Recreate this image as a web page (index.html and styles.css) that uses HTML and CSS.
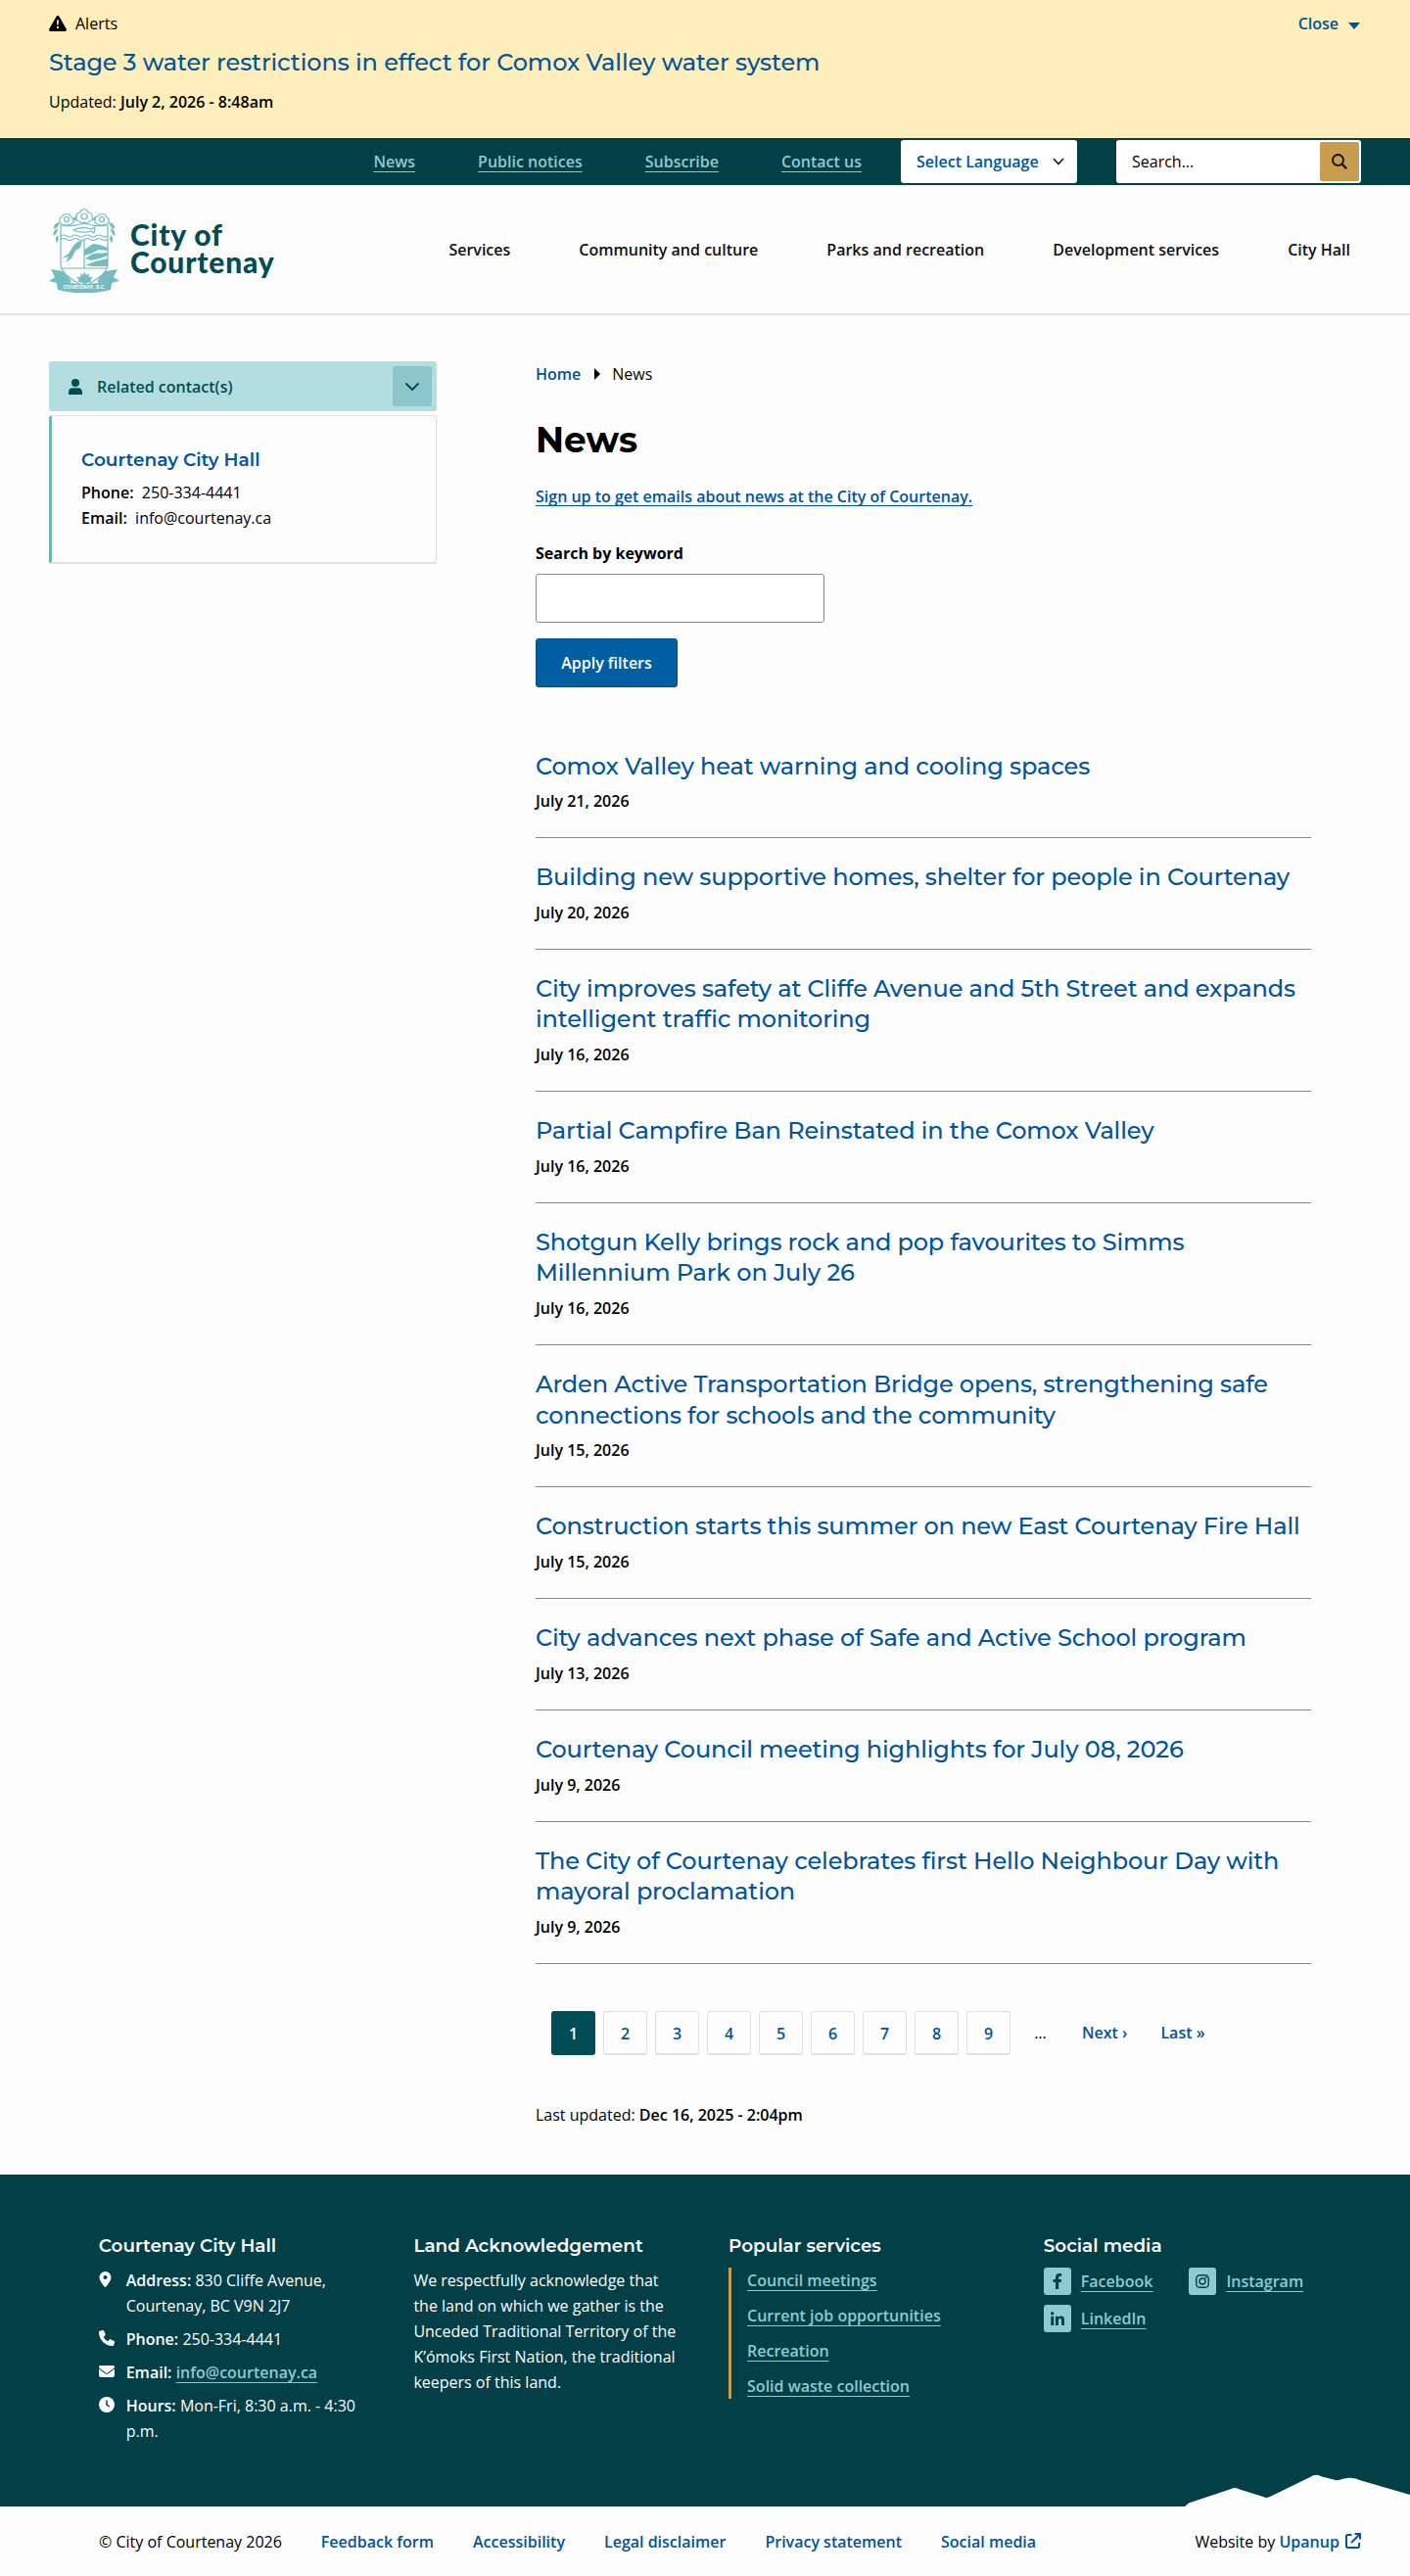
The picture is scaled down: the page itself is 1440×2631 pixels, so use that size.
FILE: index.html
```html
<!DOCTYPE html>
<html lang="en">
<head>
  <meta charset="UTF-8">
  <meta name="viewport" content="width=device-width, initial-scale=1.0">
  <title>News | City of Courtenay</title>
  <link rel="stylesheet" href="styles.css">
</head>
<body>

<section class="alert">
  <div class="container">
    <div class="alert-top">
      <span class="alert-label">
        <svg width="18" height="16" viewBox="0 0 18 16"><path d="M9 0c.6 0 1.100.300 1.400.800l7.300 12.700c.7 1.100-.1 2.500-1.400 2.500H1.700C.4 16-.4 14.600.300 13.500L7.600.800C7.900.300 8.400 0 9 0z" fill="#000"/><path d="M8 4.500h2l-.3 5H8.300zM8 11h2v2H8z" fill="#feeebb"/></svg>
        Alerts
      </span>
      <a class="close" href="#">Close <span class="caret-down"></span></a>
    </div>
    <h2 class="alert-title"><a href="#">Stage 3 water restrictions in effect for Comox Valley water system</a></h2>
    <p>Updated: <b>July 2, 2026 - 8:48am</b></p>
  </div>
</section>

<div class="topbar">
  <div class="container">
    <nav class="top-links">
      <a href="#">News</a>
      <a href="#">Public notices</a>
      <a href="#">Subscribe</a>
      <a href="#">Contact us</a>
    </nav>
    <div class="language">
      Select Language
      <svg width="12" height="8" viewBox="0 0 12 8"><path d="M1 1l5 5.500L11 1" fill="none" stroke="#222" stroke-width="1.800"/></svg>
    </div>
    <div class="search">
      <span>Search...</span>
      <button aria-label="Search"><svg width="16" height="16" viewBox="0 0 16 16"><circle cx="6.500" cy="6.500" r="5.500" fill="none" stroke="#111" stroke-width="1.900"/><path d="M10.400 10.400l4.800 4.800" stroke="#111" stroke-width="2.200"/></svg></button>
    </div>
  </div>
</div>

<header class="header">
  <div class="container">
    <a class="logo" href="#">
      <svg class="crest" width="72" height="86" viewBox="0 0 72 86">
        <g fill="none" stroke="#74bcc0" stroke-width="1.200">
          <path d="M12 17v41c2 10 13 15 24 22 11-7 22-12 24-22V17q-12 2-24-2-12 4-24 2z" fill="#fdfdfd"/>
          <path d="M12 28q3-2 6 0t6 0 6 0 6 0 6 0 6 0 6 0 6 0M12 31.500q3-2 6 0t6 0 6 0 6 0 6 0 6 0 6 0 6 0M12 61h48M36 32v29"/>
          <path d="M25 22q8-4 18-1l4-2-1 6-3-2q-10 3-18-1z"/>
          <circle cx="36" cy="8" r="3"/><circle cx="18" cy="11" r="2.500"/><circle cx="54" cy="11" r="2.500"/>
          <path d="M31 13q-5-1-3-5 0-4 4-4 1-4 4-3 3-1 4 3 4 0 4 4 2 4-3 5-2 3-5 1-3 2-5-1zM14 16q-4-1-3-4 0-4 3-4 1-3 4-2 4-1 4 2 3 1 3 4 1 3-3 4-4 2-8 0zM50 16q-4-1-3-4 0-4 3-4 1-3 4-2 4-1 4 2 3 1 3 4 1 3-3 4-4 2-8 0z"/>
        </g>
        <g fill="#74bcc0">
          <path d="M24 11l4-4 1 6zM44 12l4-5v5z"/>
          <path d="M11 14q-7 1-6 7 4-1 6-7zM9 20q-6 3-4 8 4-3 4-8zM9 27q-4 4-1 8 3-4 1-8zM61 14q7 1 6 7-4-1-6-7zM63 20q6 3 4 8-4-3-4-8zM63 27q4 4 1 8-3-4-1-8z"/>
          <path d="M13 51l7-5 5-8 4-4 5-1-2 7-5 3-4 8-6 4 3-6zM36 42l9-6 7 1 8 3v3l-9-1-8 4-7 2zM37 51l8-5 15-1v3l-8 3-9 2zM37 58l10-4 13-3v8H45z"/>
          <path d="M36 64l2 4 3-2-.5 4 4-.5-2 4 1 1-6 2v3h-2v-3l-6-2 1-1-2-4 4 .5-.5-4 3 2z"/>
          <path d="M2 62l12 2 9 10-6 5L8 76 0 74l6-4zM70 62l-12 2-9 10 6 5 9-3 8-2-6-4z"/>
          <path d="M7 72q29 10 58 0l-2 11q-27 7-54 0z"/>
        </g>
        <text x="36" y="82" text-anchor="middle" textLength="43" class="crest-text">COURTENAY, B.C.</text>
      </svg>
      <span class="logo-text"><span>City of</span><span>Courtenay</span></span>
    </a>
    <nav class="main-nav">
      <a href="#">Services</a>
      <a href="#">Community and culture</a>
      <a href="#">Parks and recreation</a>
      <a href="#">Development services</a>
      <a href="#">City Hall</a>
    </nav>
  </div>
</header>

<div class="container page">
  <aside class="sidebar">
    <div class="related">
      <svg width="14" height="16" viewBox="0 0 14 16" fill="#014d55"><circle cx="7" cy="4" r="4"/><path d="M0 16v-2.500C0 10.500 2 9.300 4.200 9.300h5.600c2.200 0 4.200 1.200 4.200 4.200V16z"/></svg>
      <span>Related contact(s)</span>
      <button aria-label="Toggle"><svg width="16" height="10" viewBox="0 0 16 10"><path d="M1.500 1.500L8 8l6.500-6.500" fill="none" stroke="#014048" stroke-width="1.800"/></svg></button>
    </div>
    <div class="contact-card">
      <h2><a href="#">Courtenay City Hall</a></h2>
      <p><b>Phone:</b>&nbsp; 250-334-4441</p>
      <p><b>Email:</b>&nbsp; info@courtenay.ca</p>
    </div>
  </aside>

  <main class="content">
    <div class="breadcrumb"><a href="#">Home</a><span class="caret-right"></span>News</div>
    <h1>News</h1>
    <p><a class="underlined" href="#">Sign up to get emails about news at the City of Courtenay.</a></p>

    <form class="filters">
      <label for="keyword">Search by keyword</label>
      <input type="text" id="keyword">
      <button type="button">Apply filters</button>
    </form>

    <div class="news-list">
      <article>
        <h2><a href="#">Comox Valley heat warning and cooling spaces</a></h2>
        <p>July 21, 2026</p>
      </article>
      <article>
        <h2><a href="#">Building new supportive homes, shelter for people in Courtenay</a></h2>
        <p>July 20, 2026</p>
      </article>
      <article>
        <h2><a href="#">City improves safety at Cliffe Avenue and 5th Street and expands<br>intelligent traffic monitoring</a></h2>
        <p>July 16, 2026</p>
      </article>
      <article>
        <h2><a href="#">Partial Campfire Ban Reinstated in the Comox Valley</a></h2>
        <p>July 16, 2026</p>
      </article>
      <article>
        <h2><a href="#">Shotgun Kelly brings rock and pop favourites to Simms<br>Millennium Park on July 26</a></h2>
        <p>July 16, 2026</p>
      </article>
      <article>
        <h2><a href="#">Arden Active Transportation Bridge opens, strengthening safe<br>connections for schools and the community</a></h2>
        <p>July 15, 2026</p>
      </article>
      <article>
        <h2><a href="#">Construction starts this summer on new East Courtenay Fire Hall</a></h2>
        <p>July 15, 2026</p>
      </article>
      <article>
        <h2><a href="#">City advances next phase of Safe and Active School program</a></h2>
        <p>July 13, 2026</p>
      </article>
      <article>
        <h2><a href="#">Courtenay Council meeting highlights for July 08, 2026</a></h2>
        <p>July 9, 2026</p>
      </article>
      <article>
        <h2><a href="#">The City of Courtenay celebrates first Hello Neighbour Day with<br>mayoral proclamation</a></h2>
        <p>July 9, 2026</p>
      </article>
    </div>

    <nav class="pager">
      <a class="page-num current" href="#">1</a>
      <a class="page-num" href="#">2</a>
      <a class="page-num" href="#">3</a>
      <a class="page-num" href="#">4</a>
      <a class="page-num" href="#">5</a>
      <a class="page-num" href="#">6</a>
      <a class="page-num" href="#">7</a>
      <a class="page-num" href="#">8</a>
      <a class="page-num" href="#">9</a>
      <span class="dots">…</span>
      <a class="next" href="#">Next ›</a>
      <a href="#">Last »</a>
    </nav>

    <p class="updated">Last updated: <b>Dec 16, 2025 - 2:04pm</b></p>
  </main>
</div>

<footer class="footer">
  <div class="footer-cols">
    <div class="col">
      <h2>Courtenay City Hall</h2>
      <ul class="address">
        <li><svg width="16" height="16" viewBox="0 0 16 16"><path d="M6.500 0a6 6 0 0 1 6 6c0 3-3.600 7.500-5.300 9.600a.9.9 0 0 1-1.400 0C4.100 13.500.5 9 .5 6a6 6 0 0 1 6-6zm0 4a2 2 0 1 0 0 4 2 2 0 0 0 0-4z"/></svg><span><b>Address:</b> 830 Cliffe Avenue, Courtenay, BC V9N 2J7</span></li>
        <li><svg width="16" height="16" viewBox="0 0 16 16"><path d="M5.200.800c-.3-.6-.9-1-1.600-.8L.9.800C.3 1 0 1.500 0 2c0 7.700 6.300 14 14 14 .6 0 1.100-.4 1.200-1l.8-2.700c.2-.7-.2-1.400-.8-1.600l-3-1.300c-.6-.2-1.200-.1-1.600.4l-1.300 1.500C7.100 10.300 5.700 8.900 4.700 6.700l1.500-1.300c.5-.4.6-1.100.4-1.600z"/></svg><span><b>Phone:</b> 250-334-4441</span></li>
        <li><svg width="16" height="16" viewBox="0 0 16 16"><path d="M1.500 2h13c.8 0 1.500.7 1.500 1.500 0 .5-.2.900-.6 1.200L8.600 9.800c-.4.300-.8.300-1.200 0L.6 4.700C.2 4.400 0 4 0 3.500 0 2.700.700 2 1.500 2zM0 5.500l6.800 5.100c.7.500 1.700.5 2.400 0L16 5.500V12a2 2 0 0 1-2 2H2a2 2 0 0 1-2-2z"/></svg><span><b>Email:</b> <a href="#">info@courtenay.ca</a></span></li>
        <li><svg width="16" height="16" viewBox="0 0 16 16"><circle cx="8" cy="8" r="8"/><path d="M8 3.500V8l3 2" fill="none" stroke="#023f47" stroke-width="1.500"/></svg><span><b>Hours:</b> Mon-Fri, 8:30 a.m. - 4:30 p.m.</span></li>
      </ul>
    </div>
    <div class="col">
      <h2>Land Acknowledgement</h2>
      <p class="land">We respectfully acknowledge that the land on which we gather is the Unceded Traditional Territory of the K’ómoks First Nation, the traditional keepers of this land.</p>
    </div>
    <div class="col">
      <h2>Popular services</h2>
      <ul class="popular">
        <li><a href="#">Council meetings</a></li>
        <li><a href="#">Current job opportunities</a></li>
        <li><a href="#">Recreation</a></li>
        <li><a href="#">Solid waste collection</a></li>
      </ul>
    </div>
    <div class="col">
      <h2>Social media</h2>
      <ul class="social">
        <li><span class="icon"><svg width="16" height="16" viewBox="0 0 16 16"><path d="M6 16V9H3.500V6H6V4.200C6 1.400 7.400 0 10 0c1 0 1.700.1 2.200.200v2.600h-1.500C9.500 2.800 9.200 3.400 9.200 4.400V6h2.900l-.5 3H9.200v7z"/></svg></span><a href="#">Facebook</a></li>
        <li><span class="icon instagram"><svg width="16" height="16" viewBox="0 0 16 16"><rect x="1.700" y="1.700" width="12.600" height="12.600" rx="3.600"/><circle cx="8" cy="8" r="3"/><circle cx="11.700" cy="4.300" r=".3"/></svg></span><a href="#">Instagram</a></li>
        <li><span class="icon"><svg width="16" height="16" viewBox="0 0 16 16"><circle cx="2.700" cy="2.700" r="1.700"/><path d="M1.300 5.700h2.900V15H1.300zM6 5.700h2.800V7c.5-.9 1.500-1.500 2.700-1.500 2.900 0 3.500 1.800 3.500 4.300V15h-2.900v-4.600c0-1.100 0-2.400-1.500-2.400S8.900 9.200 8.900 10.400V15H6z"/></svg></span><a href="#">LinkedIn</a></li>
      </ul>
    </div>
  </div>
  <svg class="mountains" width="230" height="33" viewBox="0 0 230 33"><path d="M0 33L4 29.500 46 15.500Q51 12.500 56 15.500L80 23Q84 25 88 22.500L128 3Q134-1 140 2.500L152 5.500Q156 7 161 5 171 2 180 6.500L230 21v12z" fill="#fdfdfd"/></svg>
</footer>

<div class="bottom">
  <span>© City of Courtenay 2026</span>
  <a href="#">Feedback form</a>
  <a href="#">Accessibility</a>
  <a href="#">Legal disclaimer</a>
  <a href="#">Privacy statement</a>
  <a href="#">Social media</a>
  <span class="credit">Website by <a href="#">Upanup <svg width="16" height="16" viewBox="0 0 16 16" fill="none" stroke="#00549b" stroke-width="2"><path d="M6.500 2H2.500Q1 2 1 3.500v10Q1 15 2.500 15h10q1.500 0 1.500-1.500V10M9.500 1H15v5.500M15 1L6 10"/></svg></a></span>
</div>

</body>
</html>
```
FILE: styles.css
```css
* {
  box-sizing: border-box;
}

body {
  margin: 0;
  background: #fdfdfd;
  color: #000;
  font-family: "Open Sans", sans-serif;
  font-size: 16px;
  line-height: 26px;
}

h1, h2, p, ul {
  margin: 0;
  padding: 0;
}

ul {
  list-style: none;
}

h1, h2 {
  font-family: Montserrat, Inter, sans-serif;
}

b {
  font-weight: 600;
}

a {
  color: #00549b;
  font-weight: 600;
  text-decoration: none;
}

svg {
  flex-shrink: 0;
}

button {
  border: 0;
  padding: 0;
}

.container {
  width: 1340px;
  margin: 0 auto;
}

/* alert */
.alert {
  height: 141px;
  padding-top: 11px;
  background: #feeebb;
}

.alert-top {
  display: flex;
  justify-content: space-between;
}

.alert-label {
  display: flex;
  align-items: center;
  gap: 9px;
}

.close {
  display: flex;
  align-items: center;
  gap: 10px;
  margin-right: 1px;
}

.caret-down {
  margin-top: 4px;
  border: 6px solid transparent;
  border-top: 7px solid #00549b;
  border-bottom: 0;
}

.alert-title {
  margin: 11px 0 12px;
  font-size: 24px;
  line-height: 31px;
  letter-spacing: -0.1px;
}

.alert-title a,
.news-list h2 a {
  font-weight: 500;
}

/* top bar */
.topbar {
  height: 48px;
  background: #023f47;
}

.topbar .container {
  display: flex;
  align-items: center;
  justify-content: flex-end;
  height: 48px;
}

.top-links {
  display: flex;
  gap: 64px;
  margin-right: 40px;
}

.top-links a,
.footer a {
  color: #8ecbd0;
  text-decoration: underline;
  text-decoration-thickness: 1px;
  text-underline-offset: 4px;
  text-decoration-skip-ink: none;
}

.language {
  display: flex;
  align-items: center;
  justify-content: space-between;
  width: 180px;
  height: 44px;
  margin-right: 40px;
  padding: 0 13px 0 16px;
  border-radius: 3px;
  background: #fff;
  color: #00549b;
  font-weight: 600;
}

.search {
  display: flex;
  align-items: center;
  justify-content: space-between;
  width: 250px;
  height: 44px;
  padding: 0 2px 0 16px;
  border-radius: 3px;
  background: #fff;
}

.search button {
  display: flex;
  align-items: center;
  justify-content: center;
  width: 40px;
  height: 40px;
  border-radius: 2px;
  background: #c99d4f;
}

/* header */
.header {
  height: 133px;
  border-bottom: 2px solid #e1e1e1;
}

.header .container {
  display: flex;
  justify-content: space-between;
  align-items: flex-start;
}

.logo {
  display: flex;
  gap: 11px;
  padding-top: 24px;
}

.crest-text {
  font-family: "Open Sans", sans-serif;
  font-size: 5px;
  font-weight: 700;
  fill: #fdfdfd;
}

.logo-text {
  display: flex;
  flex-direction: column;
  margin-top: 12px;
  color: #014d55;
  font-family: Lato, sans-serif;
  font-size: 30px;
  font-weight: 900;
  line-height: 28px;
  letter-spacing: 0.8px;
}

.main-nav {
  display: flex;
  gap: 70px;
  padding: 53px 11px 0 0;
}

.main-nav a {
  color: #111;
}

/* page */
.page {
  display: flex;
  gap: 101px;
  padding: 47px 51px 0 0;
}

.sidebar {
  width: 396px;
}

.related {
  display: flex;
  align-items: center;
  height: 51px;
  padding: 0 5px 0 20px;
  border-radius: 3px;
  background: #b2dee0;
  color: #014d55;
  font-weight: 600;
}

.related span {
  flex: 1;
  margin-left: 15px;
}

.related button {
  display: flex;
  align-items: center;
  justify-content: center;
  width: 40px;
  height: 41px;
  border-radius: 3px;
  background: #8cc6cb;
}

.contact-card {
  height: 152px;
  margin-top: 4px;
  padding: 32px 30px;
  border: 1px solid #e1e1e1;
  border-left: 3px solid #6fb4b6;
  border-bottom-width: 2px;
  border-radius: 3px;
}

.contact-card h2 {
  margin-bottom: 7px;
  font-size: 18.5px;
  line-height: 26px;
}

.content {
  width: 792px;
}

.breadcrumb {
  display: flex;
  align-items: center;
}

.caret-right {
  margin: 0 12px 0 14px;
  border: 6px solid transparent;
  border-left: 6px solid #000;
  border-right: 0;
}

.content h1 {
  margin: 31px 0 21px;
  font-size: 36px;
  line-height: 47px;
}

.underlined {
  text-decoration: underline;
  text-decoration-thickness: 1px;
  text-underline-offset: 3px;
  text-decoration-skip-ink: none;
}

.filters {
  display: flex;
  flex-direction: column;
  align-items: flex-start;
  margin-top: 32px;
}

.filters label {
  font-weight: 700;
}

.filters input {
  width: 295px;
  height: 50px;
  margin: 8px 0 16px;
  border: 1px solid #888;
  border-radius: 3px;
  background: #fff;
}

.filters button {
  width: 145px;
  height: 50px;
  border: 1px solid #00508c;
  border-radius: 3px;
  background: #005ea3;
  color: #fff;
  font: 600 16px "Open Sans", sans-serif;
}

.news-list {
  margin-top: 40px;
}

.news-list article {
  padding: 24.5px 0 24px;
  border-bottom: 1px solid #86888c;
}

.news-list h2 {
  margin-bottom: 7.2px;
  font-size: 24px;
  line-height: 31.2px;
  letter-spacing: -0.13px;
  white-space: nowrap;
}

.news-list p {
  font-weight: 600;
}

.pager {
  display: flex;
  align-items: center;
  gap: 8px;
  margin: 48px 0 0 16px;
}

.page-num {
  width: 45px;
  height: 45px;
  border: 1px solid #e1e1e1;
  border-bottom-width: 2px;
  border-radius: 3px;
  line-height: 44px;
  text-align: center;
}

.page-num.current {
  border-color: #014d55;
  background: #014d55;
  color: #fff;
}

.dots {
  width: 45px;
  text-align: center;
}

.next {
  margin: 0 26px 0 12px;
}

.updated {
  margin: 48px 0 48px;
}

/* footer */
.footer {
  position: relative;
  height: 339px;
  background: #023f47;
  color: #fdfdfd;
}

.footer-cols {
  display: flex;
  gap: 51.7px;
  padding: 60px 100px 0 100.7px;
}

.col {
  width: 270px;
}

.col h2 {
  margin-bottom: 9px;
  font-size: 18.4px;
  font-weight: 600;
  line-height: 26px;
}

.address li {
  display: flex;
  gap: 12px;
  width: 268px;
  margin-bottom: 8px;
}

.address svg {
  margin-top: 4px;
  fill: #fdfdfd;
}

.popular {
  padding: 0 0 0 16px;
  border-left: 3px solid #c99d4f;
}

.popular li {
  height: 36px;
}

.popular li:last-child {
  height: 26px;
}

.social {
  display: flex;
  flex-wrap: wrap;
  gap: 10px 37px;
  width: 300px;
}

.social li {
  display: flex;
  align-items: center;
  gap: 10px;
}

.icon {
  display: flex;
  align-items: center;
  justify-content: center;
  width: 28px;
  height: 28px;
  border-radius: 3px;
  background: #8ecbd0;
}

.icon svg {
  fill: #023f47;
}

.instagram svg {
  fill: none;
  stroke: #023f47;
  stroke-width: 1.4;
}

.mountains {
  position: absolute;
  right: 0;
  bottom: 0;
}

.bottom {
  display: flex;
  gap: 40px;
  height: 71px;
  padding: 23px 50px 0 101px;
}

.credit {
  margin-left: auto;
}

.credit svg {
  margin-left: 2px;
  vertical-align: -1px;
}
```
